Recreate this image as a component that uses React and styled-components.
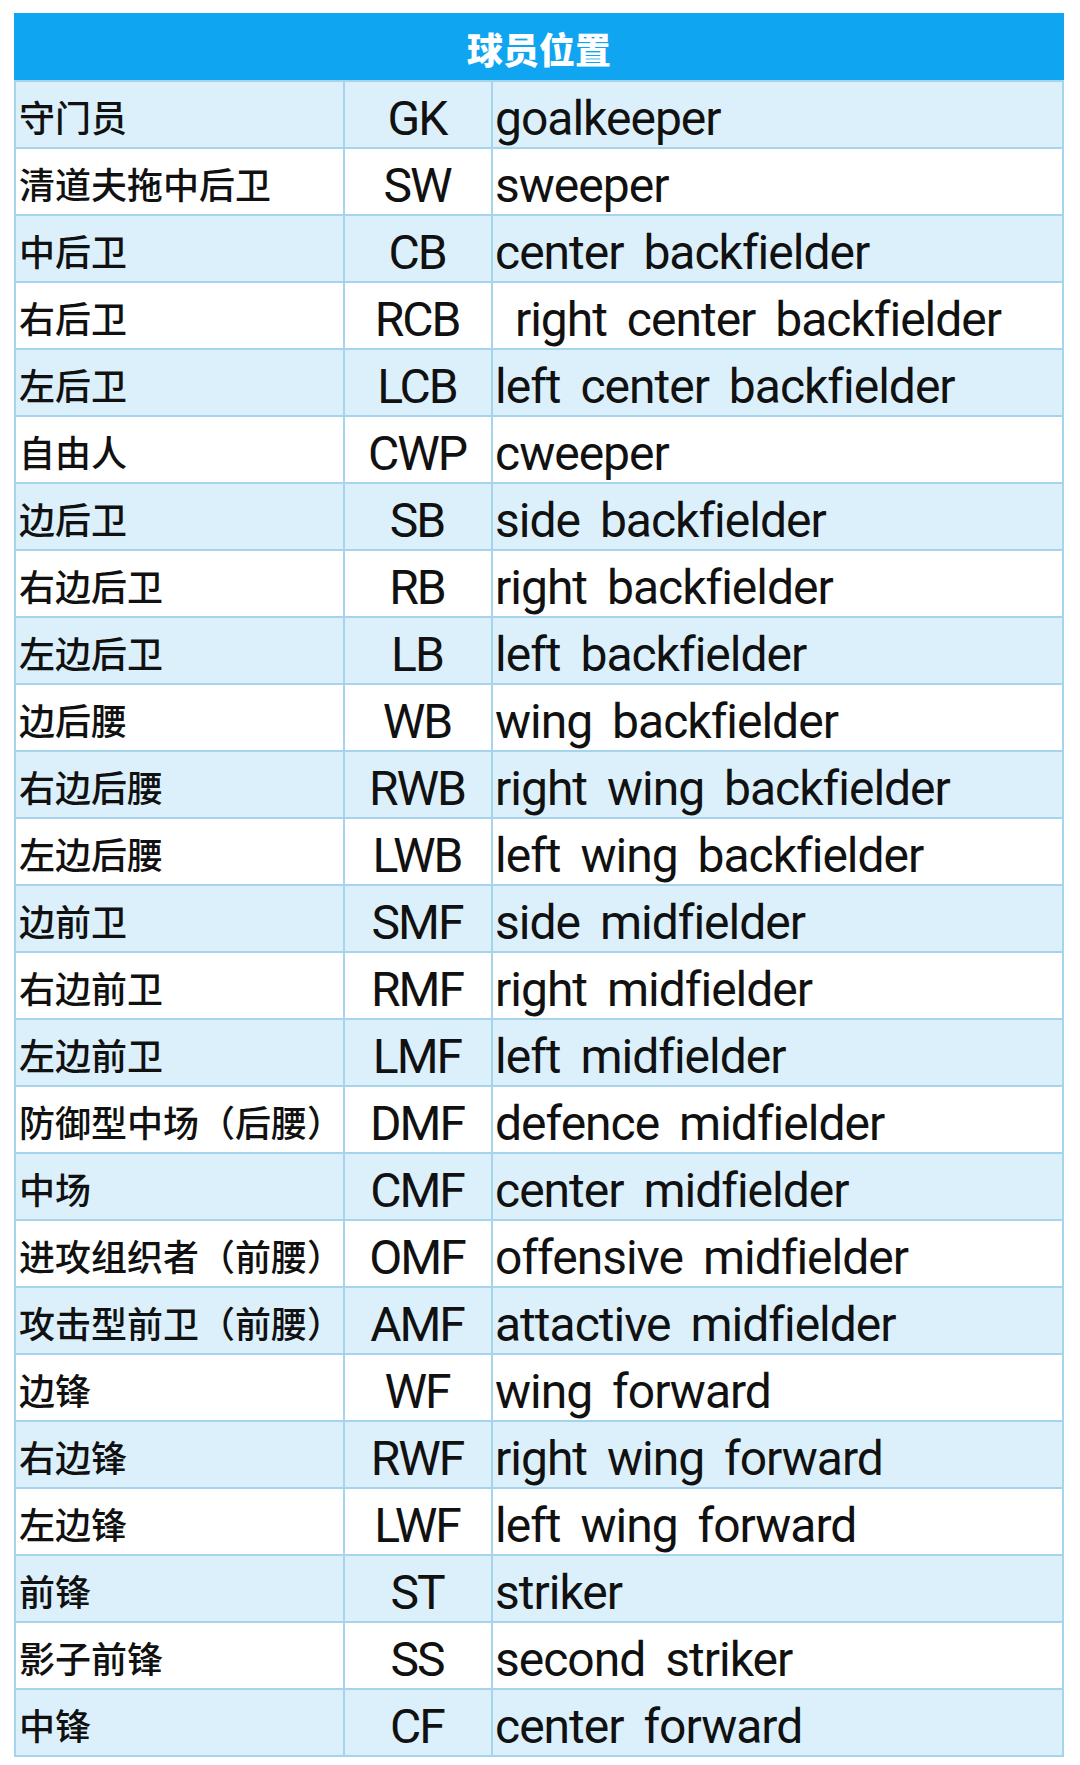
import React from "react";
import styled, { createGlobalStyle } from "styled-components";

const GlobalStyle = createGlobalStyle`
  * { box-sizing: border-box; }
  html, body { margin: 0; padding: 0; background: #ffffff; }
  body { font-family: Roboto, "Noto Sans CJK SC", sans-serif; }
`;

const Page = styled.div`
  padding: 13px 16px 10px 14px;
  background: #ffffff;
`;

const Table = styled.div`
  width: 1050px;
  border: 2px solid #a6d4ec;
  border-top: none;
  display: flex;
  flex-direction: column;
`;

const Header = styled.div`
  height: 67px;
  background: #10a5f1;
  color: #ffffff;
  display: flex;
  align-items: center;
  justify-content: center;
  font-family: "Noto Sans CJK SC", sans-serif;
  font-weight: 900;
  font-size: 36px;
  margin: 0 -2px;
  padding-top: 2px;
`;

const Row = styled.div`
  display: grid;
  grid-template-columns: 327px 148px 1fr;
  height: 67px;
  border-top: 2px solid #a6d4ec;
  background: ${(p) => (p.$shaded ? "#dcf0fb" : "#ffffff")};
`;

const Cell = styled.div`
  display: flex;
  align-items: center;
  padding-top: 7px;
  color: #111111;
  white-space: pre;
  overflow: hidden;
`;

const NameCell = styled(Cell)`
  font-family: "Noto Sans CJK SC", sans-serif;
  font-weight: 500;
  font-size: 36px;
  padding-left: 3px;
  padding-top: 2px;
`;

const CodeCell = styled(Cell)`
  justify-content: center;
  border-left: 2px solid #a6d4ec;
  font-family: Roboto, sans-serif;
  font-size: 48px;
  letter-spacing: -2px;
  padding-right: 2px;
`;

const TermCell = styled(Cell)`
  border-left: 2px solid #a6d4ec;
  padding-left: 2px;
  font-family: Roboto, sans-serif;
  font-size: 48px;
  letter-spacing: -1px;
  word-spacing: 9px;
`;

const rows = [
  ["守门员", "GK", "goalkeeper"],
  ["清道夫拖中后卫", "SW", "sweeper"],
  ["中后卫", "CB", "center backfielder"],
  ["右后卫", "RCB", " right center backfielder"],
  ["左后卫", "LCB", "left center backfielder"],
  ["自由人", "CWP", "cweeper"],
  ["边后卫", "SB", "side backfielder"],
  ["右边后卫", "RB", "right backfielder"],
  ["左边后卫", "LB", "left backfielder"],
  ["边后腰", "WB", "wing backfielder"],
  ["右边后腰", "RWB", "right wing backfielder"],
  ["左边后腰", "LWB", "left wing backfielder"],
  ["边前卫", "SMF", "side midfielder"],
  ["右边前卫", "RMF", "right midfielder"],
  ["左边前卫", "LMF", "left midfielder"],
  ["防御型中场（后腰）", "DMF", "defence midfielder"],
  ["中场", "CMF", "center midfielder"],
  ["进攻组织者（前腰）", "OMF", "offensive midfielder"],
  ["攻击型前卫（前腰）", "AMF", "attactive midfielder"],
  ["边锋", "WF", "wing forward"],
  ["右边锋", "RWF", "right wing forward"],
  ["左边锋", "LWF", "left wing forward"],
  ["前锋", "ST", "striker"],
  ["影子前锋", "SS", "second striker"],
  ["中锋", "CF", "center forward"],
];

export default function App() {
  return (
    <>
      <GlobalStyle />
      <Page>
        <Table>
          <Header>球员位置</Header>
          {rows.map(([cn, code, en], i) => (
            <Row key={code} $shaded={i % 2 === 0}>
              <NameCell>{cn}</NameCell>
              <CodeCell>{code}</CodeCell>
              <TermCell>{en}</TermCell>
            </Row>
          ))}
        </Table>
      </Page>
    </>
  );
}
